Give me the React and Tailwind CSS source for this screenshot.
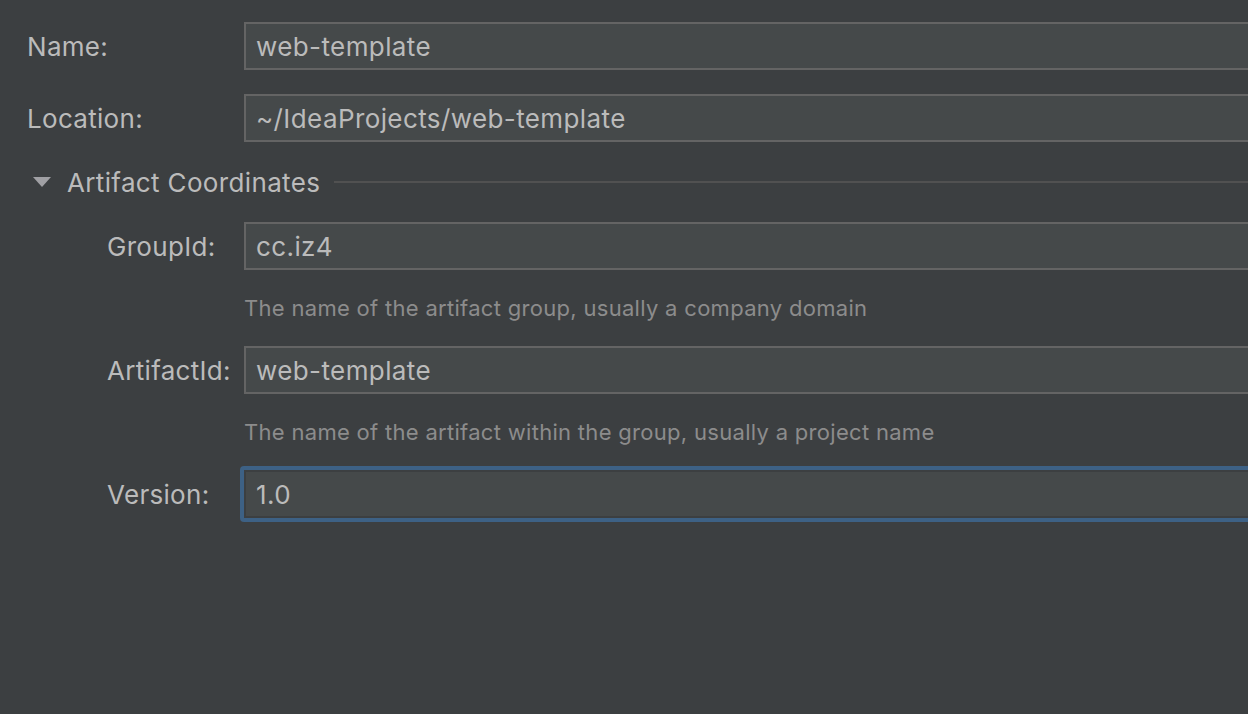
const font = { fontFamily: 'Inter, "Noto Sans", sans-serif' }

function Field({ label, value, indent, focused }) {
  return (
    <div className="flex items-center h-[48px]">
      <div className={`${indent ? 'pl-[107px]' : 'pl-[27px]'} w-[244px] shrink-0 text-[26px] text-[#bbbbbb] tracking-[0.3px]`}>
        {label}
      </div>
      {focused ? (
        <div className="-ml-[4px] -mr-[20px] flex-1 rounded-[4px] border-[4px] border-[#3d6185] p-[2px] -my-[4px]">
          <div className="h-[44px] bg-[#45494a] pl-[10px] flex items-center text-[26px] text-[#bbbbbb] tracking-[0.4px]">{value}</div>
        </div>
      ) : (
        <div className="-mr-[20px] flex-1 h-[48px] border-2 border-[#646464] bg-[#45494a] pl-[10px] flex items-center text-[26px] text-[#bbbbbb] tracking-[0.4px]">
          {value}
        </div>
      )}
    </div>
  )
}

function Hint({ children }) {
  return (
    <div className="pl-[244px] h-[30px] flex items-center text-[22px] text-[#8c8c8c] tracking-[0.3px]">{children}</div>
  )
}

export default function App() {
  return (
    <div className="h-[714px] w-[1248px] overflow-hidden bg-[#3c3f41]" style={font}>
      <div className="pt-[22px]">
        <Field label="Name:" value="web-template" />
        <div className="h-[24px]" />
        <Field label="Location:" value="~/IdeaProjects/web-template" />

        {/* section header */}
        <div className="h-[80px] flex items-center pl-[33px] pr-0">
          <svg width="18" height="10" viewBox="0 0 18 10" className="shrink-0">
            <polygon points="0,0 18,0 9,10" fill="#a0a0a4" />
          </svg>
          <span className="ml-[16px] text-[26px] text-[#bbbbbb] tracking-[0.35px]">Artifact Coordinates</span>
          <div className="ml-[14px] flex-1 h-[2px] bg-[#515151]" />
        </div>

        <Field label="GroupId:" value="cc.iz4" indent />
        <div className="h-[23px]" />
        <Hint>The name of the artifact group, usually a company domain</Hint>
        <div className="h-[23px]" />
        <Field label="ArtifactId:" value="web-template" indent />
        <div className="h-[23px]" />
        <Hint>The name of the artifact within the group, usually a project name</Hint>
        <div className="h-[23px]" />
        <Field label="Version:" value="1.0" indent focused />
      </div>
    </div>
  )
}
